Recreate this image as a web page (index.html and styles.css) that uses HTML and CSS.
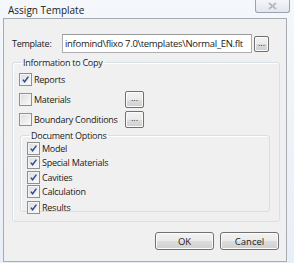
FILE: index.html
```html
<!DOCTYPE html>
<html>
<head>
<meta charset="utf-8">
<link rel="stylesheet" href="styles.css">
</head>
<body>
<div class="window">
  <div class="titlebar">
    <span class="title">Assign Template</span>
    <span class="close"><svg width="9" height="8" viewBox="0 0 9 8"><path d="M1 1 L8 7 M8 1 L1 7" stroke="#8a8f96" stroke-width="1.6" fill="none"/><path d="M1 1 L8 7 M8 1 L1 7" stroke="#ffffff" stroke-width="0.5" fill="none"/></svg></span>
  </div>
  <div class="client">
    <div class="template-row">
      <span class="label">Template:</span>
      <div class="input">infomind\flixo 7.0\templates\Normal_EN.flt</div>
      <span class="btn-dots small">...</span>
    </div>
    <fieldset class="group outer">
      <legend>Information to Copy</legend>
      <div class="row"><span class="cb checked"></span><span>Reports</span></div>
      <div class="row"><span class="cb"></span><span class="txt w1">Materials</span><span class="btn-dots">...</span></div>
      <div class="row"><span class="cb"></span><span class="txt w1">Boundary Conditions</span><span class="btn-dots">...</span></div>
      <fieldset class="group inner">
        <legend>Document Options</legend>
        <div class="row sm"><span class="cb checked"></span><span>Model</span></div>
        <div class="row sm"><span class="cb checked"></span><span>Special Materials</span></div>
        <div class="row sm"><span class="cb checked"></span><span>Cavities</span></div>
        <div class="row sm"><span class="cb checked"></span><span>Calculation</span></div>
        <div class="row sm last"><span class="cb checked"></span><span>Results</span></div>
      </fieldset>
    </fieldset>
    <div class="buttons">
      <span class="btn">OK</span>
      <span class="btn">Cancel</span>
    </div>
  </div>
</div>
</body>
</html>
```
FILE: styles.css
```css
* { box-sizing: border-box; }
html, body { margin: 0; padding: 0; }
body {
  width: 294px; height: 263px; overflow: hidden;
  font-family: "Open Sans", "Noto Sans", sans-serif;
  font-size: 9px;
  letter-spacing: -0.25px;
  color: #1a1a1a;
  background: #fff;
}
.window {
  width: 294px; height: 263px;
  background: linear-gradient(#f4f7fb, #e9eff6);
  display: flex; flex-direction: column;
  padding: 0 7px 1px 3px;
}
.titlebar {
  height: 18px;
  display: flex; align-items: flex-start;
  position: relative;
}
.title { padding: 3px 0 0 5px; font-size: 10px; letter-spacing: 0; color: #222; }
.close {
  position: absolute; right: -3px; top: 0;
  width: 35px; height: 13px;
  border: 1px solid #9aa3ae; border-top: none;
  border-radius: 0 0 3px 3px;
  background: linear-gradient(#f3f5f8, #e2e7ee);
  display: flex; align-items: center; justify-content: center;
}
.client {
  flex: 1;
  background: #f0f0f0;
  border: 1px solid #a7acb3;
  display: flex; flex-direction: column;
  padding: 15px 6px 0 8px;
}
.template-row { display: flex; align-items: center; height: 19px; }
.label { width: 50px; }
.input {
  width: 190px; height: 19px;
  background: #fff;
  border: 1px solid #abadb3;
  border-top-color: #999;
  padding: 1px 0 0 2px;
  font-size: 9.5px;
  letter-spacing: -0.3px;
  white-space: nowrap; overflow: hidden;
  line-height: 15px;
}
.btn-dots {
  width: 19px; height: 17px;
  border: 1px solid #707070; border-radius: 2px;
  background: linear-gradient(#f2f2f2 0%, #ebebeb 50%, #dddddd 51%, #cfcfcf 100%);
  box-shadow: inset 0 0 0 1px #fbfbfb;
  display: inline-flex; align-items: center; justify-content: center;
  font-size: 9px; line-height: 1; padding-bottom: 3px;
  letter-spacing: 0;
  color: #333;
}
.btn-dots.small { width: 15px; height: 16px; margin-left: 2px; }
.group {
  margin: 0;
  border: 1px solid #d5dfe5;
  border-radius: 3px;
  box-shadow: 1px 1px 0 #fff inset;
}
legend { padding: 0 2px; margin-left: 2px; line-height: 11px; }
.outer {
  margin-top: 4px;
  height: 165px;
  padding: 1px 0 0 6px;
}
.row { display: flex; align-items: center; height: 20px; white-space: nowrap; }
.row .cb { margin-right: 2px; }
.txt.w1 { width: 91px; }
.inner {
  margin: 1px 9px 0 1px;
  height: 82px;
  padding: 0 0 0 6px;
}
.row.sm { height: 14.5px; }
.row.last { height: 15px; align-items: flex-end; }
.cb {
  width: 13px; height: 13px;
  border: 1px solid #8e8f8f;
  background: linear-gradient(135deg, #dcdcdc, #fbfbfb);
  box-shadow: inset 0 0 0 1px #f4f4f4;
  flex: none;
  position: relative;
}
.cb.checked::after {
  content: "";
  position: absolute; left: 2px; top: 2px;
  width: 7px; height: 7px;
  background: no-repeat center/7px 7px url("data:image/svg+xml;utf8,<svg xmlns='http://www.w3.org/2000/svg' viewBox='0 0 7 7'><path d='M0.8 3.6 L2.6 5.8 L6.4 0.6' stroke='%23364c8f' stroke-width='1.5' fill='none'/></svg>");
}
.buttons {
  display: flex; justify-content: flex-end; gap: 6px;
  margin-top: 10px; padding-right: 1px;
}
.btn {
  width: 59px; height: 18px;
  border: 1px solid #707070; border-radius: 3px;
  background: linear-gradient(#f2f2f2 0%, #ebebeb 50%, #dddddd 51%, #cfcfcf 100%);
  box-shadow: inset 0 0 0 1px #fcfcfc;
  display: flex; align-items: center; justify-content: center;
  font-size: 9.5px;
  letter-spacing: 0;
}
```
